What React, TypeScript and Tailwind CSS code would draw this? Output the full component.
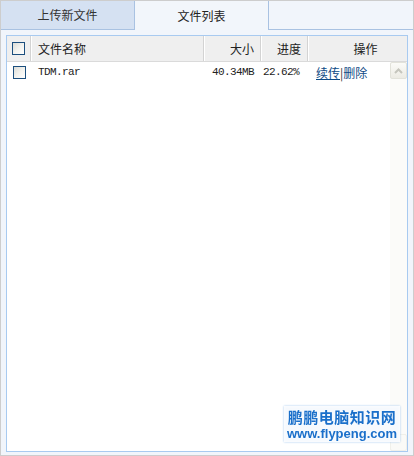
const cjk = "font-['SimSun','Noto_Sans_CJK_SC',sans-serif]";
const mono = "font-['Liberation_Mono','Noto_Sans_CJK_SC',monospace]";

function CheckBox() {
  return (
    <span className="block w-[13px] h-[13px] border border-[#1c4f7e] bg-gradient-to-br from-[#dcdcd6] via-[#f2f2ee] to-[#ffffff]" />
  );
}

function Scrollbar() {
  return (
    <div className="w-[17px] h-full flex flex-col bg-[#fbfbf9]">
      <div className="h-[17px] border border-[#e2e2da] rounded-[2px] bg-gradient-to-b from-[#fbfbf8] to-[#ecebe4] flex items-center justify-center">
        <svg width="9" height="6" viewBox="0 0 9 6">
          <path d="M1 5 L4.5 1.5 L8 5" fill="none" stroke="#c5c5bd" strokeWidth="2" />
        </svg>
      </div>
      <div className="flex-1" />
      <div className="h-[17px] border border-[#f0f0ea] rounded-[2px] bg-[#fafaf7]" />
    </div>
  );
}

export default function App() {
  return (
    <div className={`w-[414px] h-[456px] border border-[#cdcdcd] bg-[#f1f5fb] flex flex-col ${cjk} text-[12px] text-[#222]`}>
      {/* tabs */}
      <div className="h-[29px] flex border-b border-[#a9c2e2] shrink-0">
        <div className="w-[134px] bg-[#d5e1f2] border-r border-[#a9c2e2] flex items-center justify-center text-[#333] -mb-px border-b">
          上传新文件
        </div>
        <div className="w-[134px] bg-[#f2f6fb] border-r border-[#a9c2e2] flex items-center justify-center -mb-px relative z-10">
          文件列表
        </div>
        <div className="flex-1" />
      </div>

      {/* list */}
      <div className="flex-1 px-[5px] pt-[5px] pb-[3px] flex">
        <div className="relative flex-1 border border-[#a8caf0] bg-white flex flex-col">
          <div className="h-[26px] flex bg-[#efefef] border-b border-[#dadada] shrink-0">
            <div className="w-[24px] flex items-center justify-center border-r border-[#d3d3d3] shadow-[1px_0_0_#fff]">
              <CheckBox />
            </div>
            <div className="w-[173px] flex items-center pl-[7px] border-r border-[#d3d3d3] shadow-[1px_0_0_#fff]">
              文件名称
            </div>
            <div className="w-[57px] flex items-center justify-end pr-[6px] border-r border-[#d3d3d3] shadow-[1px_0_0_#fff]">
              大小
            </div>
            <div className="w-[47px] flex items-center justify-end pr-[6px] border-r border-[#d3d3d3] shadow-[1px_0_0_#fff]">
              进度
            </div>
            <div className="flex-1 flex items-center justify-center pl-[16px]">操作</div>
          </div>

          <div className="flex-1 flex">
            <div className="flex-1">
              <div className="h-[21px] flex items-center">
                <div className="w-[24px] flex justify-center">
                  <CheckBox />
                </div>
                <div className={`w-[173px] pl-[7px] ${mono} text-[11px] tracking-[-0.6px] text-[#222]`}>TDM.rar</div>
                <div className={`w-[57px] text-right pr-[7px] ${mono} text-[11px] tracking-[-0.6px] text-[#222]`}>40.34MB</div>
                <div className={`w-[47px] text-right pr-[9px] ${mono} text-[11px] tracking-[-0.6px] text-[#222]`}>22.62%</div>
                <div className="flex-1 pl-[8px] text-[#0e4a85]">
                  <a className="underline cursor-pointer">续传</a>
                  <span className="text-[#333]">|</span>
                  <a className="cursor-pointer">删除</a>
                </div>
              </div>
            </div>
            <Scrollbar />
          </div>

          <div className="absolute right-[7px] bottom-[9px] w-[116px] bg-white/90 flex flex-col items-center leading-none font-bold text-[#1a6fca] font-['Noto_Sans_CJK_SC',sans-serif] drop-shadow-[0_0_1px_#9cc3ee]">
            <div className="text-[15px] tracking-[0.5px] pt-[3px]">鹏鹏电脑知识网</div>
            <div className="text-[13px] font-['Liberation_Sans',sans-serif] pt-[3px] pb-[2px]">www.flypeng.com</div>
          </div>
        </div>
      </div>
    </div>
  );
}
